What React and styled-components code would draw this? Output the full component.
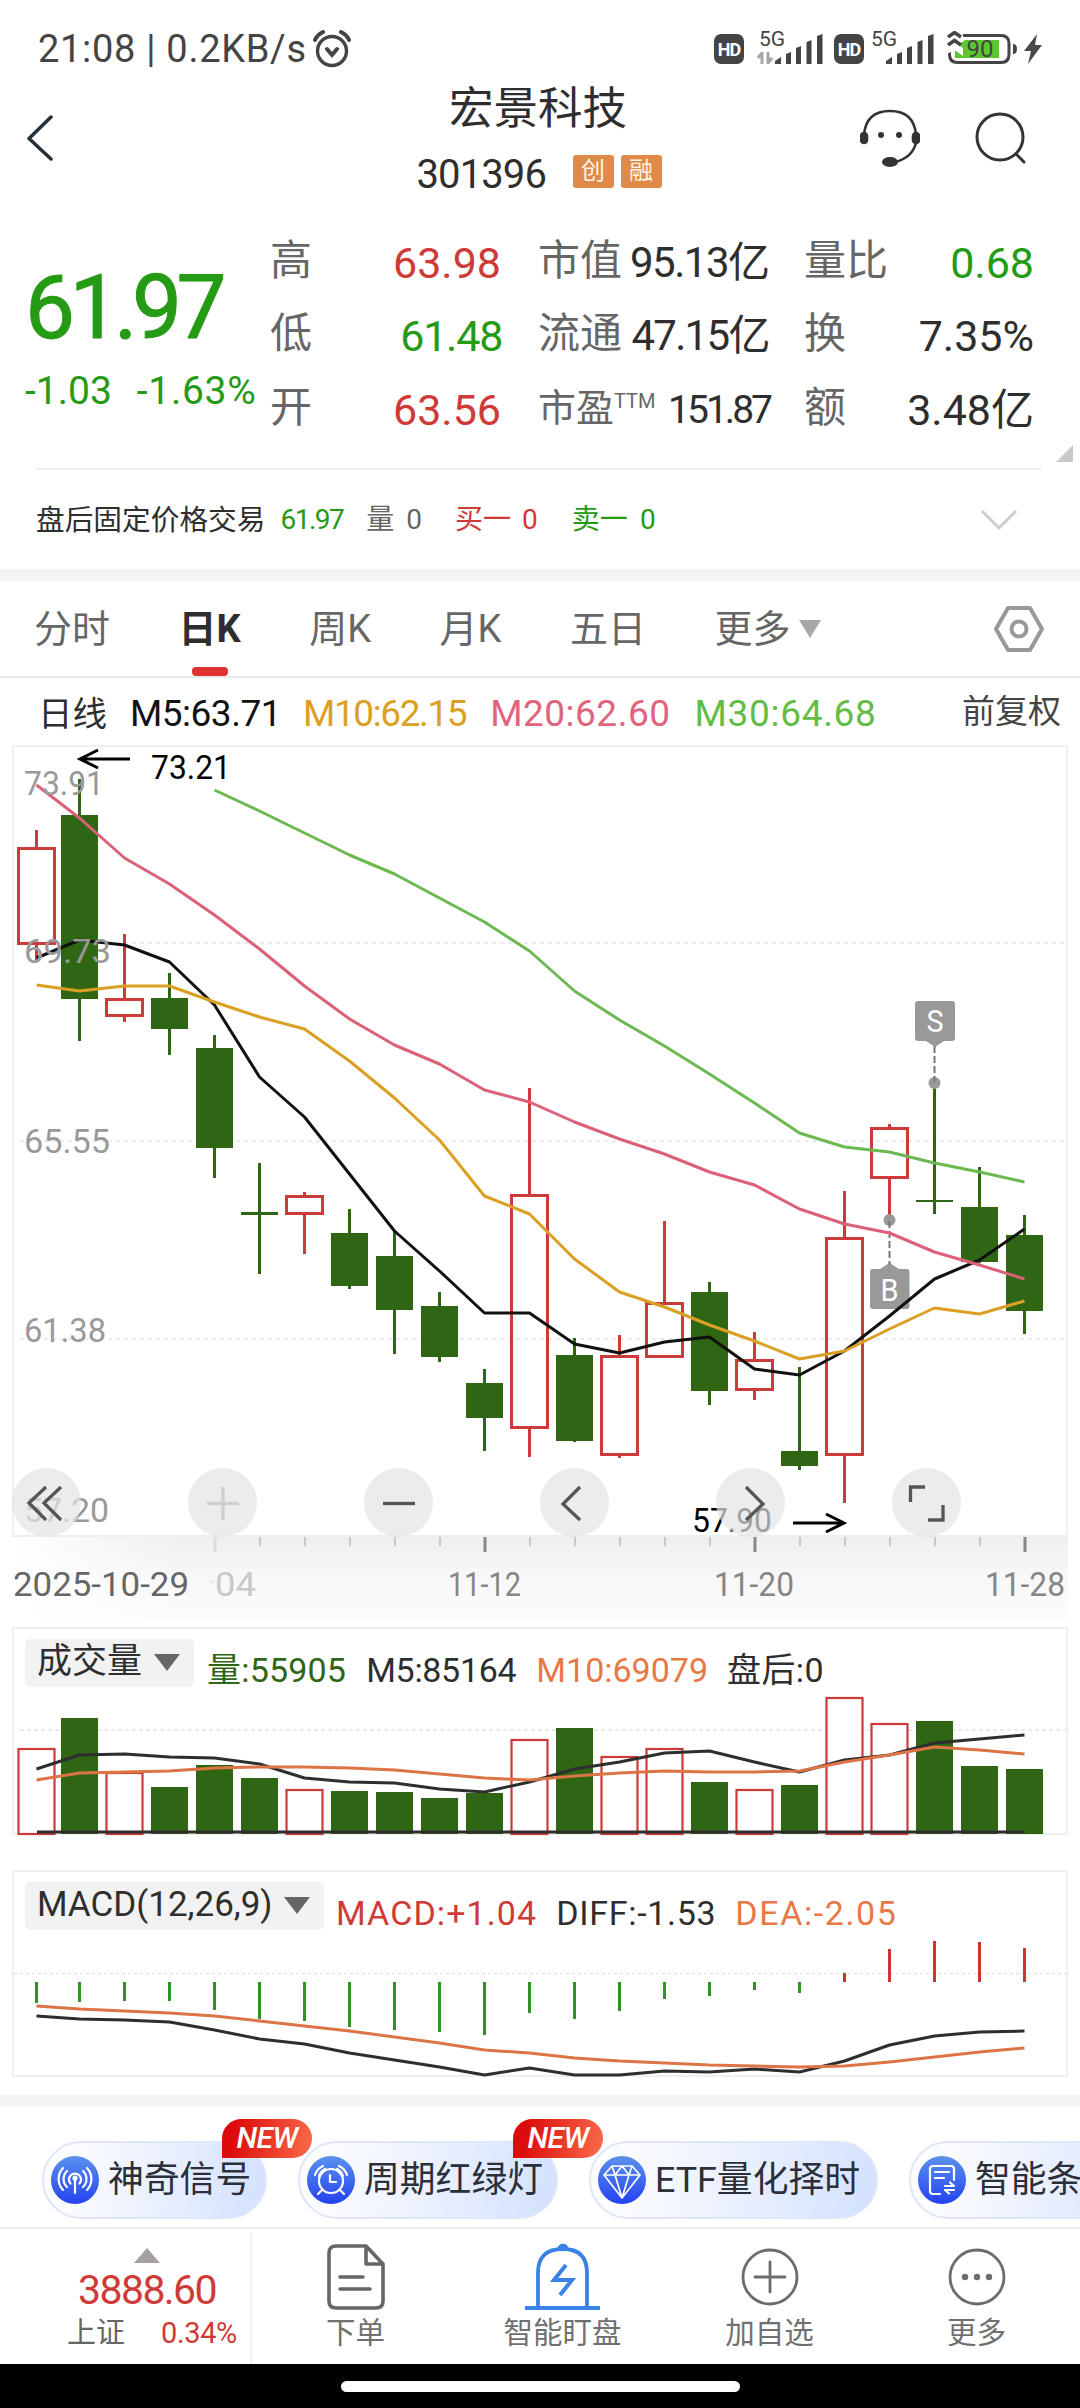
import styled, { createGlobalStyle, css } from "styled-components";

const RED = "#d03a36";
const UP = "#cc3b3a";
const GREEN = "#259a14";
const DOWN = "#2f6614";
const DARK = "#2e2e2e";
const GRAY = "#666666";

const xAt = (i) => (i === 0 ? 36.5 : 34.5 + 45 * i);

// [up, wick top, body top, body bottom, wick bottom]
const candles = [
    [1, 830, 847, 945, 960],
    [0, 779, 815, 999, 1041],
    [1, 934, 998, 1017, 1022],
    [0, 973, 998, 1029, 1055],
    [0, 1035, 1048, 1148, 1178],
    [0, 1163, 1212, 1215, 1274],
    [1, 1192, 1195, 1215, 1254],
    [0, 1209, 1233, 1286, 1289],
    [0, 1230, 1256, 1310, 1354],
    [0, 1292, 1306, 1357, 1362],
    [0, 1369, 1383, 1418, 1451],
    [1, 1088, 1194, 1429, 1457],
    [0, 1338, 1355, 1441, 1442],
    [1, 1335, 1355, 1456, 1458],
    [1, 1221, 1302, 1358, 1358],
    [0, 1282, 1292, 1391, 1405],
    [1, 1332, 1359, 1391, 1400],
    [0, 1367, 1451, 1466, 1470],
    [1, 1191, 1237, 1456, 1503],
    [1, 1124, 1127, 1179, 1220],
    [0, 1084, 1200, 1202, 1214],
    [0, 1167, 1207, 1262, 1263],
    [0, 1215, 1235, 1311, 1334],
];

const m5 = [958, 940, 945, 962, 1005, 1077, 1117, 1174, 1231, 1271, 1313, 1313, 1344, 1353, 1342, 1337, 1369, 1375, 1351, 1316, 1279, 1260, 1229];
const m10 = [985, 991, 986, 986, 1002, 1017, 1029, 1061, 1098, 1140, 1196, 1214, 1259, 1292, 1307, 1325, 1341, 1359, 1351, 1329, 1308, 1314, 1301];
const m20 = [785, 818, 858, 884, 915, 949, 986, 1019, 1045, 1064, 1090, 1102, 1122, 1139, 1154, 1172, 1185, 1209, 1224, 1233, 1252, 1265, 1279];
const m30 = [790, 811, 833, 855, 874, 898, 922, 951, 991, 1020, 1046, 1074, 1103, 1133, 1147, 1152, 1163, 1172, 1182];

const volumes = [1748, 1718, 1772, 1787, 1765, 1778, 1789, 1791, 1792, 1798, 1793, 1739, 1728, 1756, 1748, 1782, 1789, 1785, 1697, 1723, 1721, 1766, 1769];
const volM5 = [1769, 1755, 1754, 1757, 1758, 1764, 1778, 1782, 1783, 1789, 1792, 1782, 1769, 1762, 1753, 1751, 1762, 1772, 1760, 1755, 1743, 1739, 1735];
const volM10 = [1780, 1773, 1772, 1771, 1768, 1767, 1767, 1768, 1770, 1774, 1778, 1780, 1776, 1773, 1771, 1772, 1772, 1771, 1762, 1755, 1747, 1750, 1754];

const macd = [2003, 2002, 2001, 2001, 2010, 2019, 2021, 2027, 2030, 2032, 2035, 2013, 2019, 2011, 1999, 1996, 1990, 1993, 1973, 1949, 1941, 1942, 1948];
const diff = [2016, 2019, 2020, 2022, 2030, 2039, 2044, 2053, 2060, 2067, 2075, 2068, 2075, 2075, 2071, 2072, 2069, 2072, 2061, 2045, 2036, 2032, 2031];
const dea = [2006, 2009, 2011, 2013, 2016, 2021, 2026, 2031, 2037, 2043, 2050, 2053, 2058, 2061, 2063, 2065, 2066, 2067, 2066, 2062, 2057, 2052, 2048];

function Line({ data, color, start = 0, width = 3 }) {
    const points = data.map((y, i) => `${xAt(i + start)},${y}`).join(" ");
    return <polyline points={points} fill="none" stroke={color} strokeWidth={width} strokeLinejoin="round" />;
}

function Label({ x, y, width, color, size = 34, children }) {
    return (
        <text x={x} y={y} fontSize={size} fill={color} textLength={width} lengthAdjust="spacingAndGlyphs">
            {children}
        </text>
    );
}

function Candle({ index, data }) {
    const [up, high, top, bottom, low] = data;
    const x = xAt(index);
    const color = up ? UP : DOWN;
    return (
        <g>
            <path d={`M${x} ${high}V${top}M${x} ${bottom}V${low}`} stroke={color} strokeWidth="3" />
            {up ? (
                <rect x={x - 18} y={top + 1.5} width="36" height={bottom - top - 3} fill="none" stroke={color} strokeWidth="3" />
            ) : (
                <rect x={x - 18.5} y={top} width="37" height={bottom - top} fill={color} />
            )}
        </g>
    );
}

function PriceChart() {
    return (
        <Plot viewBox="14 747 1052 788" $height={788}>
            {[943, 1141, 1339].map((y) => (
                <path key={y} d={`M20 ${y}H1066`} stroke="#ececec" strokeWidth="2" strokeDasharray="4 4" />
            ))}
            {candles.map((c, i) => <Candle key={i} index={i} data={c} />)}
            <g fill="#999999">
                <rect x="915" y="1001" width="40" height="40" rx="3" />
                <path d="M926 1041h18l-9 6z" />
                <circle cx="934.5" cy="1083" r="6" />
                <rect x="870" y="1269" width="39.500" height="40" rx="3" />
                <path d="M880 1269h19l-9.500-6z" />
                <circle cx="889.500" cy="1220" r="6" />
            </g>
            <path d="M934.5 1046V1082M889.500 1221V1264" stroke="#777777" strokeWidth="2" strokeDasharray="7 3" />
            <Label x={926.5} y={1032} width={17} color="#ffffff" size={31}>S</Label>
            <Label x={880.5} y={1301} width={18} color="#ffffff" size={31}>B</Label>
            <Line data={m5} color="#111111" />
            <Line data={m10} color="#dba023" />
            <Line data={m20} color="#db6078" />
            <Line data={m30} color="#6cb951" start={4} />
            <Label x={24} y={795} width={80} color="#999999">73.91</Label>
            <Label x={24} y={963} width={87} color="#999999">69.73</Label>
            <Label x={24} y={1153} width={86} color="#999999">65.55</Label>
            <Label x={24} y={1342} width={82} color="#999999">61.38</Label>
            <Label x={24} y={1522} width={85} color="#999999">57.20</Label>
            <Label x={151} y={779} width={80} color="#000000">73.21</Label>
            <Label x={692} y={1532} width={80} color="#000000">57.90</Label>
            <path d="M130 759H80M98 750L80 759L98 768" fill="none" stroke="#000000" strokeWidth="3" />
            <path d="M793 1523H844M826 1514L844 1523L826 1532" fill="none" stroke="#000000" strokeWidth="3" />
        </Plot>
    );
}

function TimeAxis() {
    const ticks = Array.from({ length: 19 }, (_, i) => i + 4);
    return (
        <Axis viewBox="0 1537 1080 83">
            <defs>
                <linearGradient id="axisShade" x1="0" y1="0" x2="0" y2="1">
                    <stop offset="0" stopColor="#efefef" />
                    <stop offset="0.45" stopColor="#f7f7f7" />
                    <stop offset="1" stopColor="#fcfcfc" />
                </linearGradient>
                <linearGradient id="axisFade">
                    <stop offset="0" stopColor="#ffffff" />
                    <stop offset="1" stopColor="#ffffff" stopOpacity="0" />
                </linearGradient>
            </defs>
            <rect x="13" y="1537" width="1055" height="83" fill="url(#axisShade)" />
            <rect x="13" y="1537" width="170" height="83" fill="url(#axisFade)" />
            {ticks.map((i) => {
                const big = (i - 4) % 6 === 0;
                const color = i === 4 ? "#dddddd" : big ? "#888888" : "#c8c8c8";
                return <path key={i} d={`M${xAt(i) + 0.5} 1537v${big ? 15 : 9}`} stroke={color} strokeWidth={big ? 3 : 2} />;
            })}
            <Label x={13} y={1596} width={176} color="#666666">2025-10-29</Label>
            <path d="M210 1582h5" stroke="#ececec" strokeWidth="2.500" />
            <Label x={215} y={1596} width={41} color="#c9c9c9">04</Label>
            <Label x={448} y={1596} width={73} color="#868686">11-12</Label>
            <Label x={714} y={1596} width={80} color="#868686">11-20</Label>
            <Label x={985} y={1596} width={80} color="#868686">11-28</Label>
        </Axis>
    );
}

function VolumeChart() {
    return (
        <Plot viewBox="14 1690 1052 143" $height={143}>
            <path d="M20 1730H1066" stroke="#e2e2e2" strokeWidth="1.500" strokeDasharray="4 3" />
            {volumes.map((top, i) =>
                candles[i][0] ? (
                    <rect key={i} x={xAt(i) - 18} y={top + 1} width="36" height={1833 - top} fill="#ffffff" stroke={UP} strokeWidth="2.200" />
                ) : (
                    <rect key={i} x={xAt(i) - 18.5} y={top} width="37" height={1834 - top} fill={DOWN} />
                )
            )}
            <Line data={volM5} color="#2e2e2e" />
            <Line data={volM10} color="#dd7445" />
            <path d="M37 1832H1024.5" stroke="#2e2e2e" strokeWidth="3" />
        </Plot>
    );
}

function MacdChart() {
    return (
        <Plot viewBox="14 1935 1052 140" $height={140}>
            <path d="M14 1973.500H1066" stroke="#e2e2e2" strokeWidth="1.500" strokeDasharray="3 3" />
            {macd.map((y, i) => (
                <path key={i} d={`M${xAt(i)} 1982V${y}`} stroke={y < 1982 ? "#cf3434" : "#2f9422"} strokeWidth="3" />
            ))}
            <Line data={diff} color="#2e2e2e" />
            <Line data={dea} color="#dd7445" />
        </Plot>
    );
}

function Signal() {
    return (
        <svg width="48" height="30" viewBox="0 0 48 30" fill="#444444">
            <path d="M0 30v-3l6-4v7zM11 30V20l5-2v12zM21 30V14l5-2v18zM31.500 30V8l5-2v24zM42 30V2l5.500-2v30z" />
        </svg>
    );
}

function StatusIcons() {
    return (
        <Icons>
            <Hd>HD</Hd>
            <Network $left={15} $width={64}>
                <em>5G</em>
                <svg className="traffic" width="16" height="12" viewBox="0 0 16 12" fill="none" stroke="#a5a5a5" strokeWidth="3">
                    <path d="M5 12V1L1 6M11 0v11l4-5" />
                </svg>
                <Signal />
            </Network>
            <Hd $left={11}>HD</Hd>
            <Network $left={7} $width={63}>
                <em>5G</em>
                <Signal />
            </Network>
            <Battery>
                <svg width="70" height="36" viewBox="0 0 70 36" fill="none">
                    <path d="M16 4.500H54q8 0 8 8V23.500q0 8-8 8H10.500q-8 0-8-8V18" stroke="#444444" strokeWidth="3" />
                    <path d="M8 27V20l3-6 7-5H52V27z" fill="#5bc92b" />
                    <path d="M0 16l7.500-5L16 17v8l-8.500-6L0 23z" fill="#ffffff" />
                    <path d="M1 6l6.500-4.500L14 6M1 14l6.500-4.500L14 14" stroke="#444444" strokeWidth="3.500" />
                    <path d="M66 13q4 0 4 5t-4 5z" fill="#444444" />
                </svg>
                <span>90</span>
            </Battery>
            <svg width="18" height="30" viewBox="0 0 18 30" fill="#4a4a4a">
                <path d="M13 0L0 17h7L4 30 18 11h-7z" />
            </svg>
        </Icons>
    );
}

const stats = [
    [
        { name: "高", value: "63.98", color: RED },
        { name: "市值", value: "95.13亿", size: 42, space: -1.5 },
        { name: "量比", value: "0.68", color: GREEN },
    ],
    [
        { name: "低", value: "61.48", color: GREEN, space: -1.2 },
        { name: "流通", value: "47.15亿", size: 42, space: -1.7 },
        { name: "换", value: "7.35%" },
    ],
    [
        { name: "开", value: "63.56", color: RED },
        { name: "市盈", note: "TTM", value: "151.87", size: 39, space: -3 },
        { name: "额", value: "3.48亿" },
    ],
];

const tabs = ["分时", "日K", "周K", "月K", "五日", "更多"];

const features = [
    { name: "神奇信号", icon: "signal", width: 225, isNew: true },
    { name: "周期红绿灯", icon: "clock", width: 260, isNew: true },
    { name: "ETF量化择时", icon: "diamond", width: 289 },
    { name: "智能条", icon: "order", width: 260 },
];

const featureIcons = {
    signal: (
        <>
            <path d="M24 22V37M19.500 27.500a6 6 0 1 1 9 0M16 31a11 11 0 0 1 0-16M32 31a11 11 0 0 0 0-16M12 34a16 16 0 0 1 0-22M36 34a16 16 0 0 0 0-22" />
            <circle cx="24" cy="22" r="1.500" fill="#ffffff" />
        </>
    ),
    clock: (
        <>
            <circle cx="24" cy="25" r="12" />
            <path d="M23 19v7h6M15 34l-4 4M33 34l4 4M8 19a15 15 0 0 1 8-9M12 20a12 12 0 0 1 6-7M40 19a15 15 0 0 0-8-9M36 20a12 12 0 0 0-6-7" />
        </>
    ),
    diamond: <path d="M14 10H34L42 19 24 42 6 19zM6 19H42M14 10l3 9 7 23 7-23 3-9M17 19l7-9 7 9" strokeWidth="1.700" />,
    order: (
        <path d="M22 38H15q-3 0-3-3V13q0-3 3-3H33q3 0 3 3V24M17 16H31M17 22H26M27 30H36l-4-3.500M36 34H27l4 3.500" />
    ),
};

const navs = [
    {
        name: "下单",
        icon: (
            <svg width="58" height="66" viewBox="0 0 58 66" fill="none" stroke="#666666" strokeWidth="3.600" strokeLinejoin="round" strokeLinecap="round">
                <path d="M39 2H9q-7 0-7 7V57q0 7 7 7H49q7 0 7-7V20zM39 2V20H56M13 33H36M13 45H43" />
            </svg>
        ),
    },
    {
        name: "智能盯盘",
        icon: (
            <svg width="75" height="68" viewBox="0 0 75 68" fill="none" stroke="#3a82e8" strokeWidth="3.800">
                <path d="M0 65H75M13 65V30Q13 6 38 6Q62 6 62 30V65" />
                <path d="M41 22L29 37H47L35 52" strokeWidth="4" />
                <path d="M33 5q1-4 5-4t5 4z" fill="#3a82e8" strokeWidth="1" />
            </svg>
        ),
    },
    {
        name: "加自选",
        icon: (
            <svg width="58" height="58" viewBox="0 0 58 58" fill="none" stroke="#6c6c6c" strokeWidth="2.800" strokeLinecap="round">
                <circle cx="29" cy="29" r="27" />
                <path d="M29 14V44M14 29H44" />
            </svg>
        ),
    },
    {
        name: "更多",
        icon: (
            <svg width="58" height="58" viewBox="0 0 58 58" fill="#6c6c6c">
                <circle cx="29" cy="29" r="27" fill="none" stroke="#6c6c6c" strokeWidth="2.800" />
                <circle cx="17" cy="29" r="3.200" />
                <circle cx="29" cy="29" r="3.200" />
                <circle cx="41" cy="29" r="3.200" />
            </svg>
        ),
    },
];

const tools = [
    { key: "first", d: "M34 19L17 35L34 52M49 19L32 35L49 52" },
    { key: "plus", d: "M19 35.500H51M35 19V52", off: true },
    { key: "minus", d: "M19 35.500H51" },
    { key: "prev", d: "M40 19L23 36L40 52" },
    { key: "next", d: "M30 19L47 36L30 52" },
    { key: "full", d: "M18.500 34V19H33M51 37V52H36" },
];

export default function App() {
    return (
        <Page>
            <GlobalStyle />
            <StatusBar>
                <Clock>21:08 | 0.2KB/s</Clock>
                <svg width="40" height="38" viewBox="0 0 40 38" fill="none" stroke="#444444" strokeWidth="3.400" strokeLinecap="round">
                    <circle cx="20" cy="21" r="14.500" />
                    <path d="M15 19l5 6 5-6M3 10q2-5 8-8M37 10q-2-5-8-8" strokeWidth="4" />
                </svg>
                <StatusIcons />
            </StatusBar>

            <Header>
                <svg width="28" height="46" viewBox="0 0 28 46" fill="none" stroke="#26303a" strokeWidth="3.500" strokeLinecap="round" strokeLinejoin="round">
                    <path d="M25 2L3 23.500L25 44" />
                </svg>
                <Title>
                    <h1>宏景科技</h1>
                    <Code>
                        <span>301396</span>
                        <Tag>创</Tag>
                        <Tag>融</Tag>
                    </Code>
                </Title>
                <Actions>
                    <svg width="60" height="58" viewBox="0 0 60 58" fill="none" stroke="#333333" strokeWidth="2.600">
                        <path d="M4 26Q6 2 30 2T56 26M56 34Q52 49 35 53" />
                        <rect x="1" y="24" width="6" height="10" rx="3" fill="#333333" />
                        <rect x="53" y="24" width="6" height="10" rx="3" fill="#333333" />
                        <ellipse cx="30" cy="53" rx="8" ry="5" fill="#333333" strokeWidth="0" />
                        <circle cx="21" cy="26" r="3" fill="#333333" strokeWidth="0" />
                        <circle cx="39" cy="26" r="3" fill="#333333" strokeWidth="0" />
                    </svg>
                    <svg width="52" height="52" viewBox="0 0 52 52" fill="none" stroke="#333333" strokeWidth="3" strokeLinecap="round">
                        <circle cx="25" cy="25" r="23" />
                        <path d="M41 42L49 50" />
                    </svg>
                </Actions>
            </Header>

            <Quote>
                <Price>
                    <strong>61.97</strong>
                    <div>
                        <span>-1.03</span>
                        <span>-1.63%</span>
                    </div>
                </Price>
                <Stats>
                    {stats.flat().map((s) => (
                        <Stat key={s.name} $color={s.color} $size={s.size} $space={s.space} $note={s.note}>
                            <span>{s.name}{s.note && <sup>{s.note}</sup>}</span>
                            <b>{s.value}</b>
                        </Stat>
                    ))}
                </Stats>
                <Corner />
            </Quote>

            <AfterHours>
                <span>盘后固定价格交易</span>
                <AfterItem $color={GREEN} $left={15} $tight>61.97</AfterItem>
                <AfterItem $color={GRAY} $left={23}>量</AfterItem>
                <AfterItem $color={GRAY} $left={12}>0</AfterItem>
                <AfterItem $color={RED} $left={33}>买一</AfterItem>
                <AfterItem $color={RED} $left={11}>0</AfterItem>
                <AfterItem $color={GREEN} $left={34}>卖一</AfterItem>
                <AfterItem $color={GREEN} $left={12}>0</AfterItem>
                <svg width="38" height="22" viewBox="0 0 38 22" fill="none" stroke="#cccccc" strokeWidth="3">
                    <path d="M2 2L19 19L36 2" />
                </svg>
            </AfterHours>

            <Band />

            <Tabs>
                {tabs.map((tab) => <Tab key={tab} $active={tab === "日K"}>{tab}</Tab>)}
                <Triangle $size={11} $height={18} $color="#a8a8a8" />
                <svg width="50" height="48" viewBox="0 0 50 48" fill="none" stroke="#999999" strokeWidth="4" strokeLinejoin="round">
                    <path d="M14 3H36L48 24L36 45H14L2 24z" />
                    <circle cx="25" cy="24" r="7.500" />
                </svg>
            </Tabs>

            <Averages>
                <span>日线</span>
                <Average $left={23} $color="#111111" $space={-0.5}>M5:63.71</Average>
                <Average $left={22} $color="#dba023" $space={-1.4}>M10:62.15</Average>
                <Average $left={24} $color="#e0647c" $space={0.5}>M20:62.60</Average>
                <Average $left={24} $color="#62bd45" $space={0.7}>M30:64.68</Average>
                <Adjust>前复权</Adjust>
            </Averages>

            <Frame>
                <PriceChart />
                <Toolbar>
                    {tools.map((tool) => (
                        <Tool key={tool.key}>
                            <svg width="70" height="70" viewBox="0 0 70 70" fill="none" stroke={tool.off ? "#cfcfcf" : "#555555"} strokeWidth="3.300">
                                <path d={tool.d} />
                            </svg>
                        </Tool>
                    ))}
                </Toolbar>
            </Frame>
            <TimeAxis />

            <Frame $top={7}>
                <Legend $height={61}>
                    <Picker $width={169}>
                        成交量
                        <Triangle $size={13} $height={17} $color="#666666" />
                    </Picker>
                    <Value $left={13} $color={DOWN} $space={0.2}>量:55905</Value>
                    <Value $left={20} $color={DARK} $space={-0.3}>M5:85164</Value>
                    <Value $left={20} $color="#e87845">M10:69079</Value>
                    <Value $left={19} $color={DARK} $space={0.4}>盘后:0</Value>
                </Legend>
                <VolumeChart />
            </Frame>

            <Frame $top={35}>
                <Legend $height={63}>
                    <Picker $width={299}>
                        MACD(12,26,9)
                        <Triangle $size={13} $height={17} $color="#666666" />
                    </Picker>
                    <Value $left={12} $color={RED} $space={1.1}>MACD:+1.04</Value>
                    <Value $left={19} $color={DARK} $space={0.7}>DIFF:-1.53</Value>
                    <Value $left={19} $color="#e87845" $space={1.6}>DEA:-2.05</Value>
                </Legend>
                <MacdChart />
            </Frame>

            <Spacer />
            <Band />

            <Features>
                {features.map((f) => (
                    <Feature key={f.name} $width={f.width}>
                        <svg width="48" height="48" viewBox="0 0 48 48">
                            <defs>
                                <linearGradient id={`fill-${f.icon}`} x1="0" y1="0" x2="0" y2="1">
                                    <stop offset="0" stopColor="#5b92ee" />
                                    <stop offset="1" stopColor="#2441f0" />
                                </linearGradient>
                            </defs>
                            <circle cx="24" cy="24" r="24" fill={`url(#fill-${f.icon})`} />
                            <g fill="none" stroke="#ffffff" strokeWidth="2.200" strokeLinecap="round" strokeLinejoin="round">
                                {featureIcons[f.icon]}
                            </g>
                        </svg>
                        {f.name}
                        {f.isNew && <Badge>NEW</Badge>}
                    </Feature>
                ))}
            </Features>

            <Nav>
                <Index>
                    <ArrowUp />
                    <strong>3888.60</strong>
                    <div>
                        <span>上证</span>
                        <em>0.34%</em>
                    </div>
                </Index>
                {navs.map((nav) => (
                    <NavItem key={nav.name}>
                        <div>{nav.icon}</div>
                        {nav.name}
                    </NavItem>
                ))}
            </Nav>
            <Gesture><i /></Gesture>
        </Page>
    );
}

const GlobalStyle = createGlobalStyle`
    * {
        box-sizing: border-box;
    }
    body {
        margin: 0;
        background-color: #FFFFFF;
    }
    svg {
        display: block;
        flex-shrink: 0;
    }
    h1 {
        margin: 0;
        font-weight: 400;
    }
    em, i {
        font-style: normal;
    }
`

const Page = styled.div`
    width: 1080px;
    height: 2408px;
    overflow: hidden;
    display: flex;
    flex-direction: column;
    background-color: #FFFFFF;
    color: ${DARK};
    font-family: Roboto, "Noto Sans CJK SC", sans-serif;
    line-height: 46px;
    white-space: nowrap;
    > * {
        flex-shrink: 0;
    }
`

const StatusBar = styled.div`
    height: 76px;
    padding: 22px 38px 0 38px;
    display: flex;
    align-items: center;
    color: #444444;
`

const Clock = styled.span`
    width: 274px;
    font-size: 38px;
    letter-spacing: 0.7px;
`

const Icons = styled.div`
    height: 30px;
    margin-left: auto;
    display: flex;
    align-items: center;
`

const Hd = styled.span`
    width: 30px;
    height: 30px;
    margin-left: ${(p) => p.$left || 0}px;
    border-radius: 7px;
    background-color: #444444;
    color: #FFFFFF;
    font-size: 18px;
    font-weight: 700;
    line-height: 31px;
    text-align: center;
    letter-spacing: -1px;
`

const Network = styled.div`
    position: relative;
    width: ${(p) => p.$width}px;
    height: 30px;
    margin-left: ${(p) => p.$left}px;
    display: flex;
    justify-content: flex-end;
    em {
        position: absolute;
        left: 0;
        top: -6px;
        font-size: 21px;
        line-height: 22px;
    }
    .traffic {
        position: absolute;
        left: -2px;
        bottom: 0;
    }
`

const Battery = styled.div`
    position: relative;
    width: 70px;
    height: 36px;
    margin: 0 7px 0 13px;
    span {
        position: absolute;
        left: 18px;
        top: 4px;
        width: 30px;
        font-size: 24px;
        line-height: 28px;
        text-align: center;
    }
`

const Header = styled.div`
    height: 124px;
    padding: 0 25px 0 26px;
    display: grid;
    grid-template-columns: 1fr 243px 1fr;
    align-items: center;
`

const Title = styled.div`
    display: flex;
    flex-direction: column;
    align-items: center;
    h1 {
        margin-right: 5px;
        font-size: 44.5px;
        line-height: 66px;
    }
`

const Code = styled.div`
    height: 58px;
    display: flex;
    align-items: center;
    gap: 7px;
    span:first-child {
        width: 149px;
        margin-left: -3px;
        padding-top: 8px;
        font-size: 40px;
        letter-spacing: -0.9px;
    }
`

const Tag = styled.span`
    width: 41px;
    height: 33px;
    border-radius: 3px;
    background-color: #E08A49;
    color: #FFF4E4;
    font-size: 24px;
    line-height: 32px;
    text-align: center;
`

const Actions = styled.div`
    display: flex;
    justify-content: flex-end;
    align-items: center;
    gap: 55px;
    padding-right: 28px;
`

const Quote = styled.div`
    position: relative;
    height: 268px;
    padding: 26px 46px 0 25px;
    display: flex;
`

const Price = styled.div`
    width: 246px;
    padding-top: 32px;
    color: ${GREEN};
    strong {
        display: block;
        font-size: 89px;
        font-weight: 400;
        line-height: 100px;
        letter-spacing: -5.5px;
        -webkit-text-stroke: 1px ${GREEN};
    }
    div {
        margin-top: 8px;
        display: flex;
        gap: 25px;
        font-size: 39px;
        line-height: 50px;
    }
    span + span {
        letter-spacing: 0.7px;
    }
`

const Stats = styled.div`
    display: grid;
    grid-template-columns: 230px 228px 229px;
    grid-auto-rows: 73.5px;
    column-gap: 38px;
`

const Stat = styled.div`
    display: flex;
    align-items: center;
    justify-content: space-between;
    color: ${GRAY};
    font-size: ${(p) => (p.$note ? 38 : 42)}px;
    span {
        margin: -4px 0 0 -1px;
    }
    sup {
        font-size: 20px;
        line-height: 0;
        vertical-align: 13px;
    }
    b {
        color: ${(p) => p.$color || DARK};
        font-weight: 400;
        font-size: ${(p) => p.$size || 43}px;
        letter-spacing: ${(p) => p.$space || 0}px;
        margin-right: ${(p) => p.$space || 0}px;
    }
`

const Corner = styled.i`
    position: absolute;
    right: 7px;
    bottom: 6px;
    border-left: 17px solid transparent;
    border-bottom: 17px solid #C9C9C9;
`

const AfterHours = styled.div`
    height: 101px;
    margin: 0 38px 0 36px;
    padding-right: 24px;
    border-top: 2px solid #EFEFEF;
    display: flex;
    align-items: center;
    font-size: 28.7px;
    svg {
        margin-left: auto;
    }
`

const AfterItem = styled.span`
    margin-left: ${(p) => p.$left}px;
    color: ${(p) => p.$color};
    font-size: 28px;
    letter-spacing: ${(p) => (p.$tight ? -1.5 : 0)}px;
`

const Band = styled.div`
    height: 12px;
    background-color: #F4F4F4;
`

const Tabs = styled.div`
    height: 97px;
    padding: 0 36px 0 34px;
    border-bottom: 2px solid #EAEAEA;
    display: flex;
    align-items: center;
    > svg {
        margin-left: auto;
    }
    > i {
        margin-left: 9px;
    }
`

const Tab = styled.div`
    position: relative;
    color: ${(p) => (p.$active ? DARK : GRAY)};
    font-size: 38px;
    font-weight: ${(p) => (p.$active ? 700 : 400)};
    & + & {
        margin-left: 68.5px;
    }
    ${(p) => p.$active && css`
        &::after {
            content: "";
            position: absolute;
            left: 13px;
            bottom: -24px;
            width: 36px;
            height: 9px;
            border-radius: 4px;
            background-color: #E03232;
        }
    `}
`

const Triangle = styled.i`
    border-left: ${(p) => p.$size}px solid transparent;
    border-right: ${(p) => p.$size}px solid transparent;
    border-top: ${(p) => p.$height}px solid ${(p) => p.$color};
`

const Averages = styled.div`
    height: 67px;
    padding: 4px 19px 0 38px;
    display: flex;
    align-items: center;
    font-size: 34.5px;
`

const Average = styled.span`
    margin-left: ${(p) => p.$left}px;
    color: ${(p) => p.$color};
    font-size: 37px;
    letter-spacing: ${(p) => p.$space}px;
`

const Adjust = styled.span`
    margin: -4px 0 0 auto;
    color: #444444;
    font-size: 33px;
`

const Frame = styled.div`
    position: relative;
    margin: ${(p) => p.$top || 0}px 12px 0 12px;
    border: 2px solid #EFEFEF;
`

const Plot = styled.svg`
    width: 1052px;
    height: ${(p) => p.$height}px;
    overflow: visible;
`

const Axis = styled.svg`
    width: 1080px;
    height: 83px;
`

const Toolbar = styled.div`
    position: absolute;
    left: -2px;
    bottom: -2px;
    display: flex;
    gap: 107px;
`

const Tool = styled.div`
    width: 69px;
    height: 69px;
    border-radius: 50%;
    background-color: rgba(228, 228, 228, 0.7);
`

const Legend = styled.div`
    height: ${(p) => p.$height}px;
    padding: 10px 0 0 11px;
    display: flex;
`

const Picker = styled.div`
    width: ${(p) => p.$width}px;
    height: 48px;
    padding: 0 14px 2px 12px;
    border-radius: 5px;
    background-color: #F2F2F2;
    display: flex;
    align-items: center;
    justify-content: space-between;
    font-size: 35px;
`

const Value = styled.span`
    margin-left: ${(p) => p.$left}px;
    color: ${(p) => p.$color};
    font-size: 34px;
    line-height: 63px;
    letter-spacing: ${(p) => p.$space || 0}px;
`

const Spacer = styled.div`
    height: 18px;
`

const Features = styled.div`
    height: 120px;
    padding: 34px 0 0 42px;
    display: flex;
    gap: 31px;
    overflow: hidden;
`

const Feature = styled.div`
    position: relative;
    flex-shrink: 0;
    width: ${(p) => p.$width}px;
    height: 78px;
    padding-left: 7px;
    border: 2px solid #DFE6F8;
    border-radius: 39px;
    background: linear-gradient(100deg, #FCFDFF 10%, #EDF2FE 45%, #D3E1FF 100%);
    display: flex;
    align-items: center;
    gap: 9px;
    color: #2A2F3A;
    font-size: 35.8px;
`

const Badge = styled.span`
    position: absolute;
    right: -47px;
    top: -24px;
    z-index: 1;
    width: 90px;
    height: 39px;
    border-radius: 20px 20px 20px 0;
    background: linear-gradient(100deg, #DC0C0C 15%, #FA6C4A 100%);
    color: #FFFFFF;
    font-size: 30px;
    font-style: italic;
    font-weight: 500;
    line-height: 38px;
    text-align: center;
    letter-spacing: -0.5px;
`

const Nav = styled.div`
    height: 137px;
    border-top: 2px solid #EEEEEE;
    display: flex;
`

const Index = styled.div`
    width: 252px;
    margin-top: 4px;
    padding: 15px 0 0 44px;
    border-right: 2px solid #F0F2F2;
    display: flex;
    flex-direction: column;
    align-items: center;
    color: ${RED};
    strong {
        margin-top: 2px;
        font-size: 41px;
        font-weight: 400;
        line-height: 50px;
        letter-spacing: -1.6px;
    }
    div {
        margin-left: 10px;
        display: flex;
        gap: 36px;
        font-size: 29px;
        line-height: 36px;
    }
    span {
        color: ${GRAY};
    }
    em {
        letter-spacing: -0.4px;
    }
`

const ArrowUp = styled.i`
    border-left: 13px solid transparent;
    border-right: 13px solid transparent;
    border-bottom: 15px solid #A5A1A1;
`

const NavItem = styled.div`
    width: 207px;
    padding-top: 13px;
    color: #707070;
    font-size: 29.5px;
    line-height: 43px;
    text-align: center;
    div {
        height: 70px;
        display: flex;
        align-items: center;
        justify-content: center;
    }
`

const Gesture = styled.div`
    height: 44px;
    padding-top: 17px;
    background-color: #000000;
    i {
        display: block;
        width: 399px;
        height: 11px;
        margin: 0 auto;
        border-radius: 6px;
        background-color: #FFFFFF;
    }
`
